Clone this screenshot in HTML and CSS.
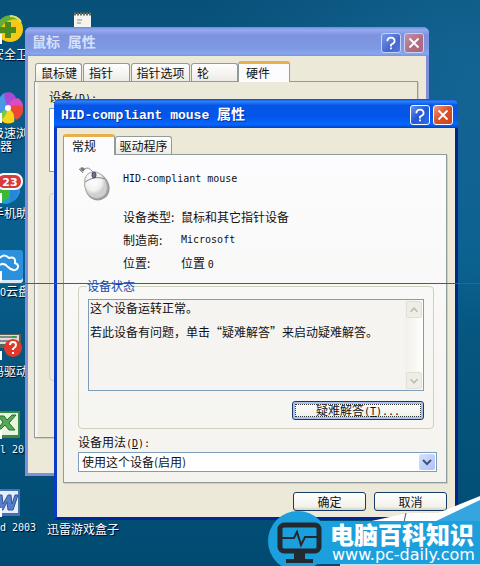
FILE: index.html
```html
<!DOCTYPE html>
<html lang="zh-CN">
<head>
<meta charset="utf-8">
<title>HID-compliant mouse 属性</title>
<link rel="stylesheet" href="styles.css">
</head>
<body>
<main class="desktop">
  <div class="shortcut s-guard">
    <svg width="26" height="30" viewBox="0 0 26 30"><circle cx="10" cy="15" r="13" fill="#f6c914"/><path d="M-3 15A13 13 0 0 1 20 6Q10 3 3 11T-1 23Z" fill="#63ae35"/><path d="M10 2A13 13 0 0 1 21 8" fill="none" stroke="#d9e766" stroke-width="2"/><path d="M5 8h6v5h5v6h-5v5H5v-5H0v-6h5Z" fill="#4b8b1d"/><path d="M0 20h2v10H0z" fill="#fff"/></svg>
    <span class="label cut">安全卫</span>
  </div>
  <div class="shortcut s-browser">
    <svg width="26" height="32" viewBox="0 0 26 32"><g transform="translate(8 16)"><path d="M0 0Q-8-6-4-15Q5-18 8-10Z" fill="#a74bd4"/><path d="M0 0Q1-9 10-10Q17-5 14 2Z" fill="#d94cc3"/><path d="M0 0Q8-5 15-1Q16 9 8 12Z" fill="#ed4635"/><path d="M0 0Q8 5 6 14Q-2 18-7 12Z" fill="#f6d51c"/><path d="M0 0Q-2 10-8 12V2Z" fill="#7ac943"/><path d="M0 0L-8 5V-11L-4-15Q-3-6 0 0Z" fill="#4799e6"/><circle r="3" fill="#fff"/></g><path d="M0 21h2v10H0z" fill="#fff"/></svg>
    <span class="label cut">极速浏</span><span class="label next">器</span>
  </div>
  <div class="shortcut s-phone">
    <svg width="26" height="34" viewBox="0 0 26 34"><path d="M0 10H20V20Q17 30 6 32L0 31Z" fill="#1f9cdf"/><path d="M0 12H17Q13 27 0 30Z" fill="#39b938"/><path d="M10 15h9q0 10-9 16Z" fill="#2587da"/><rect x="-3" y="2" width="25" height="15" rx="7" fill="#d63b3d" stroke="#fff" stroke-width="2"/><text x="10" y="14" class="badge">23</text><path d="M0 21h2v10H0z" fill="#fff"/></svg>
    <span class="label cut">手机助</span>
  </div>
  <div class="shortcut s-cloud">
    <svg width="26" height="34" viewBox="0 0 26 34"><rect x="-8" y="3" width="31" height="30" rx="3" fill="#d9e9f5"/><rect x="-8" width="31" height="30" rx="3" fill="#2c91dd"/><path d="M0 8Q4 3 9 8Q16 6 15 13Q20 15 17 19Q13 22 8 17Q4 12 0 15" fill="none" stroke="#fff" stroke-width="2"/><path d="M0 21h2v10H0z" fill="#fff"/></svg>
    <span class="label"><span class="latin">O</span>云盘</span>
  </div>
  <div class="shortcut s-driver">
    <svg width="26" height="28" viewBox="0 0 26 28"><path d="M0 1h21v14H0z" fill="#5e625f"/><path d="M0 2h19v9H0z" fill="#ddd"/><path d="M0 4h17M0 8h10" stroke="#85898a" stroke-width="2"/><path d="M12 3h4v2h-4z" fill="#38a338"/><circle cx="13" cy="15" r="9" fill="#df3929"/><path d="M10 12q0-3 3-3t3 3q0 2-3 4v1M13 19v2" fill="none" stroke="#fff" stroke-width="2"/><path d="M0 18h2v9H0z" fill="#fff"/></svg>
    <span class="label cut">码驱动器</span>
  </div>
  <div class="shortcut s-excel">
    <svg width="26" height="28" viewBox="0 0 26 28"><path d="M0 0h20v27H0z" fill="#388945"/><path d="M0 2h18v22H0z" fill="#e8f4df"/><path d="M-2 5h6l3 4 5-5h4l-7 8 6 7h-6l-4-5-4 4h-3l5-7Z" fill="#55a957" stroke="#246f2d"/><path d="M0 19h2v9H0z" fill="#fff"/></svg>
    <span class="label latin">l 20</span>
  </div>
  <div class="shortcut s-word">
    <svg width="26" height="28" viewBox="0 0 26 28"><path d="M0 0h20v27H0z" fill="#4670b3"/><path d="M0 2h18v22H0z" fill="#e4edfa"/><path d="M-2 6h4l1 9 5-9h3l1 9 3-9h3l-5 15H8l-1-8-4 8H0Z" fill="#5680cc" stroke="#345397"/><path d="M0 19h2v9H0z" fill="#fff"/></svg>
    <span class="label latin">d 2003</span>
  </div>
  <div class="shortcut s-notes">
    <svg width="20" height="18" viewBox="0 0 20 18"><path d="M1 2h17v16H1z" fill="#f3f3ef"/><path d="M1 2h17" stroke="#6f6a58" stroke-width="3" stroke-dasharray="2 1"/><path d="M4 8h5M4 11h4" stroke="#8a8a82"/></svg>
  </div>
  <div class="shortcut s-games"><span class="label">迅雷游戏盒子</span></div>

  <section class="window back">
    <header class="titlebar"><h2>鼠标<span class="title-latin"> </span>属性</h2>
      <button class="cap help" aria-label="帮助"><svg viewBox="0 0 20 20"><path d="M6 8q0-4 4-4t4 4q0 2-4 4v2M10 15v2" /></svg></button>
      <button class="cap close" aria-label="关闭"><svg viewBox="0 0 20 20"><path d="M5 5l10 10M15 5L5 15"/></svg></button>
    </header>
    <div class="client">
      <nav class="tabs"><button class="tab w-key">鼠标键</button><button class="tab w-key">指针</button><button class="tab w-opt">指针选项</button><button class="tab w-key">轮</button><button class="tab active">硬件</button></nav>
      <div class="panel"><p class="devices">设备<span class="latin">(<u>D</u>):</span></p><div class="list"></div><div class="props"></div></div>
    </div>
  </section>

  <section class="window front">
    <header class="titlebar"><h1><span class="title-latin">HID-compliant mouse </span>属性</h1>
      <button class="cap help" aria-label="帮助"><svg viewBox="0 0 20 20"><path d="M6 8q0-4 4-4t4 4q0 2-4 4v2M10 15v2" /></svg></button>
      <button class="cap close" aria-label="关闭"><svg viewBox="0 0 20 20"><path d="M5 5l10 10M15 5L5 15"/></svg></button>
    </header>
    <div class="client">
      <nav class="tabs"><button class="tab active">常规</button><button class="tab w-drv">驱动程序</button></nav>
      <div class="panel">
        <div class="device">
          <svg width="34" height="36" viewBox="0 0 34 36"><defs><radialGradient id="shell" cx=".4" cy=".35"><stop offset="0" stop-color="#fff"/><stop offset=".7" stop-color="#f1f1f1"/><stop offset="1" stop-color="#cfcfcf"/></radialGradient></defs><path d="M8 14Q5 22 9 29Q14 37 23 35Q34 31 31 19Q27 9 19 8Q11 7 8 14Z" fill="#999"/><path d="M7 13Q5 21 9 28Q14 35 22 33Q31 30 29 19Q26 9 18 7Q10 6 7 13Z" fill="url(#shell)" stroke="#aaa"/><path d="M7 17Q17 10 27 14M15 7Q10 1 7 4T1 4M1 4l4 4" fill="none" stroke="#888"/><path d="M2 3Q5 1 7 4L5 7Z" fill="#777"/><ellipse cx="16" cy="10" rx="2" ry="3" fill="#6c7797" stroke="#445"/></svg>
          <div>
            <p class="name latin">HID-compliant mouse</p>
            <dl><dt>设备类型:</dt><dd>鼠标和其它指针设备</dd><dt>制造商:</dt><dd class="latin">Microsoft</dd><dt>位置:</dt><dd>位置 <span class="latin">0</span></dd></dl>
          </div>
        </div>
        <fieldset>
          <legend>设备状态</legend>
          <div class="status">
            <textarea readonly aria-label="设备状态">这个设备运转正常。
若此设备有问题，单击“疑难解答”来启动疑难解答。</textarea>
            <div class="scroll"><button aria-label="向上"><svg viewBox="0 0 16 16"><path d="M4 10l4-4 4 4"/></svg></button><button aria-label="向下"><svg viewBox="0 0 16 16"><path d="M4 6l4 4 4-4"/></svg></button></div>
          </div>
          <button class="push default">疑难解答<span class="latin">(<u>T</u>)...</span></button>
        </fieldset>
        <label class="usage-label" for="usage">设备用法<span class="latin">(<u>D</u>):</span></label>
        <div class="combo"><select id="usage"><option>使用这个设备(启用)</option></select><svg viewBox="0 0 16 16"><path d="M4 6l4 4 4-4"/></svg></div>
      </div>
      <footer><button class="push">确定</button><button class="push">取消</button></footer>
    </div>
  </section>

  <div class="rule"></div>

  <aside class="brand">
    <svg class="brand-art" viewBox="0 0 212 70"><path d="M99 26L140 17H170L212 0V70H99Z" fill="#fff"/><path d="M166 26L212 4V70H100V26Z" fill="#35a5df"/><path d="M138 17L136 26" stroke="#555"/><circle cx="30" cy="45" r="30" fill="#1c9fdd"/><path d="M39 25H212V68H20Z" fill="#1c9fdd"/><rect x="12" y="29" width="39" height="26" rx="4" fill="none" stroke="#222a30" stroke-width="5"/><path d="M14 42h12l3-6 4 13 4-8h13" fill="none" stroke="#222a30" stroke-width="2"/><path d="M26 57h11v6h8v4H18v-4h8Z" fill="#222a30"/><path d="M72 68H212V70H72Z" fill="#b9dff2"/></svg>
    <div class="brand-text"><strong>电脑百科知识</strong><span>www.pc-daily.com</span></div>
  </aside>
</main>
</body>
</html>
```
FILE: styles.css
```css
* { box-sizing: border-box; }
body { margin: 0; color: #111; font: 12px/12px "Noto Sans CJK SC", sans-serif; }
button, select, textarea { font: inherit; color: inherit; padding: 0; margin: 0; }
p, h1, h2, dl, dd { margin: 0; }
.latin { font-family: "DejaVu Sans Mono", "Noto Sans CJK SC", monospace; font-size: 10px; }
.desktop {
  position: relative; min-height: 100vh; overflow: hidden;
  background:
    radial-gradient(ellipse 60% 45% at 100% 12%, #1b6ea099, transparent),
    linear-gradient(180deg, #075078 0, #0c5c8c 28%, #08608e 45%, #06567f 60%, #014b72 100%);
}

.shortcut { position: absolute; left: 0; color: #fff; text-shadow: 1px 1px 1px #002; white-space: nowrap; }
.shortcut svg { display: block; }
.label { display: block; line-height: 14px; }
.cut { margin-left: -8px; }
.next { line-height: 12px; }
.badge { font: bold 11px "DejaVu Sans", sans-serif; fill: #fff; text-anchor: middle; text-shadow: none; }
.s-guard { top: 14px; }
.s-guard .label { margin-top: 3px; }
.s-browser { top: 92px; }
.s-browser .cut { margin-top: 2px; }
.s-phone { top: 172px; }
.s-cloud { top: 250px; }
.s-driver { top: 333px; }
.s-driver .label { margin-top: 3px; }
.s-excel { top: 411px; }
.s-word { top: 489px; }
.s-excel .label, .s-word .label { margin-top: 4px; }
.s-notes { left: 73px; top: 12px; }
.s-games { left: 47px; top: 522px; }

.window { position: absolute; border-radius: 6px 6px 0 0; background: #ece9d8; }
.back { left: 25px; right: 51px; top: 27px; border: 3px solid #7f8fdb; border-top: 0; }
.front { left: 54px; right: 22px; top: 99px; border: 3px solid #0b3bc4; border-right-color: #00258c; border-bottom-color: #00259a; border-top: 0; }
.titlebar {
  display: flex; align-items: center; gap: 3px; height: 29px; margin: 0 -3px; padding: 2px 5px 0 7px;
  border-radius: 6px 6px 0 0; color: #fff;
  background: linear-gradient(#0a4acb 0, #2c82fa 8%, #0655e6 22%, #0455ea 60%, #0566fd 88%, #0040c0 100%);
}
.back .titlebar { color: #d6e0fa; background: linear-gradient(#7789d7 0, #95abf0 10%, #7c93df 28%, #8099e3 75%, #86a6ee 92%, #7c92de 100%); }
.titlebar h1, .titlebar h2 { flex: 1; font-size: 14px; line-height: 20px; font-weight: bold; white-space: pre; }
.front h1 { text-shadow: 1px 1px 0 #0033a0; }
.title-latin { font-family: "Liberation Mono", monospace; font-size: 13px; }
.cap { width: 20px; height: 20px; border: 1px solid #fff; border-radius: 3px; background: linear-gradient(135deg, #6793f2, #2458d4 50%, #2c6bec); }
.close { background: linear-gradient(135deg, #f09a7e, #d8502a 50%, #c84420); }
.cap svg { display: block; width: 18px; height: 18px; fill: none; stroke: #fff; stroke-width: 2; }
.back .cap { border-color: #c6d1f6; }
.back .help { background: linear-gradient(135deg, #7799e6, #4668d0 60%, #5278dc); }
.back .close { background: linear-gradient(135deg, #c391a8, #b06c7f 60%, #a9667e); }

.client { padding: 6px 8px 6px 6px; }
.tabs { display: flex; align-items: flex-end; gap: 1px; height: 20px; padding-left: 1px; }
.front .tabs { padding-left: 0; gap: 0; }
.tab { height: 18px; border: 1px solid #919b9c; border-bottom: 0; border-radius: 3px 3px 0 0; background: linear-gradient(#fff, #ecebe6); line-height: 16px; }
.w-key { width: 47px; text-align: left; padding-left: 5px; white-space: nowrap; }
.w-opt { width: 59px; }
.w-drv { width: 57px; }
.tab.active { position: relative; width: 52px; height: 21px; margin-bottom: -1px; padding-right: 10px; border-top: 3px solid #e8b04c; background: #fcfcfe; }
.back .tab.active { margin-left: -1px; padding-right: 12px; }
.panel { border: 1px solid #919b9c; box-shadow: 1px 1px 0 #d0cec0; background: linear-gradient(#fcfcfe, #f4f3ee); }
.back .client { padding-bottom: 35px; }
.back .tabs { height: 19px; }
.back .panel { height: 357px; padding: 8px 14px; background: linear-gradient(90deg, #fcfcfe, #ece9d8 4px); }
.devices { line-height: 14px; }
.list { height: 64px; margin-top: 2px; border: 1px solid #7f9db9; background: #fff; }
.props { height: 188px; margin-top: 21px; border: 1px solid #d0d0bf; border-radius: 4px; }

.front .panel { padding: 10px 9px 10px 14px; }
.device { display: grid; grid-template-columns: 34px 1fr; column-gap: 11px; height: 112px; }
.name { line-height: 28px; }
dl { display: grid; grid-template-columns: 58px 1fr; grid-auto-rows: 23px; margin-top: 13px; line-height: 22px; }
dt { white-space: nowrap; }
fieldset { min-width: 0; margin: 3px 3px 0 0; padding: 7px 9px 8px; border: 1px solid #d0d0bf; border-radius: 4px; }
legend { margin-left: -1px; padding: 0; line-height: 12px; color: #1846a8; }
.status { display: flex; height: 92px; border: 1px solid #7f9db9; background: #f5f4f1; }
textarea { flex: 1; min-width: 0; margin-top: -4px; padding: 0 0 8px 1px; border: 0; outline: 0; resize: none; overflow: hidden; background: transparent; line-height: 24px; white-space: pre; }
.scroll { display: flex; flex-direction: column; justify-content: space-between; width: 18px; padding: 1px; background: linear-gradient(90deg, #f1f0ea, #fefefb); }
.scroll button { width: 16px; height: 17px; border: 1px solid #e2e0d6; border-radius: 2px; background: #efeee6; }
.scroll svg { display: block; fill: none; stroke: #c0bdaf; stroke-width: 2; }
.push { min-width: 73px; height: 19px; border: 1px solid #153c66; border-radius: 3px; background: linear-gradient(#fff, #f2f1ea 80%, #d8d2c4); line-height: 16px; }
.default { display: block; min-width: 132px; margin: 10px 0 0 auto; box-shadow: inset 0 0 0 2px #a9c3f0; outline: 1px dotted #333; outline-offset: -4px; }
.usage-label { display: block; margin-top: 6px; line-height: 14px; }
.combo { position: relative; height: 20px; margin-top: 1px; border: 1px solid #7f9db9; background: #fff; }
.combo select { display: block; width: 100%; height: 18px; padding: 0 20px 0 3px; border: 0; appearance: none; background: transparent; }
.combo svg { position: absolute; right: 1px; top: 1px; width: 16px; height: 16px; border-radius: 2px; background: linear-gradient(135deg, #d5e1fd, #adc3f4); fill: none; stroke: #3e5480; stroke-width: 2; pointer-events: none; }
footer { display: flex; justify-content: flex-end; gap: 8px; margin-top: 9px; }

.rule { position: absolute; left: 0; right: 0; top: 283px; height: 1px; background: #c0283c; }
.brand { position: absolute; right: 0; bottom: 0; width: 212px; height: 70px; color: #fff; }
.brand-art { position: absolute; inset: 0; }
.brand-text { position: relative; display: flex; flex-direction: column; padding: 25px 0 0 62px; white-space: nowrap; }
.brand-text strong { font-size: 24px; line-height: 26px; font-weight: 900; }
.brand-text span { padding-left: 2px; font: 16px/16px "DejaVu Sans", sans-serif; }
```
